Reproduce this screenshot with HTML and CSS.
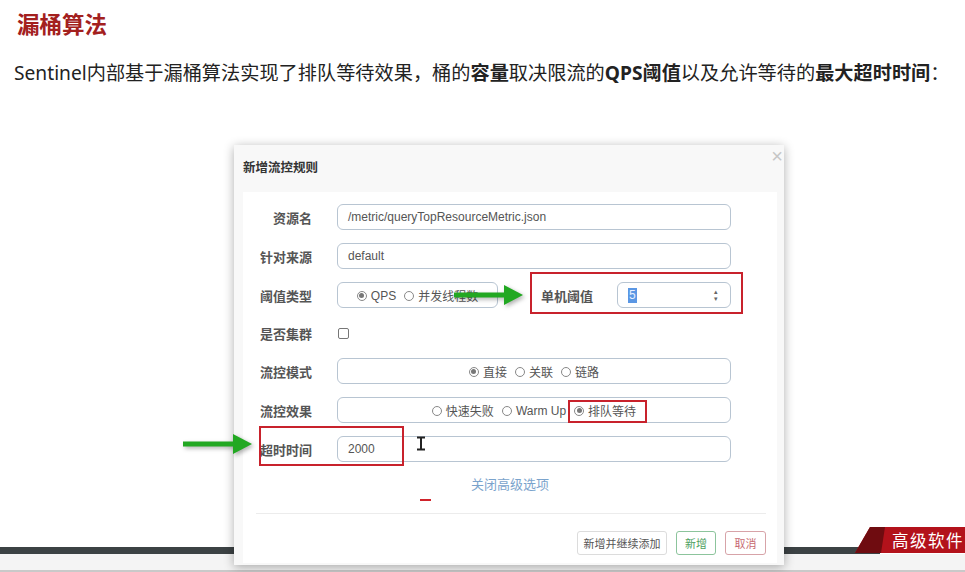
FILE: index.html
```html
<!DOCTYPE html>
<html lang="zh-CN">
<head>
<meta charset="utf-8">
<title>漏桶算法</title>
<link rel="stylesheet" href="styles.css">
</head>
<body>
<div class="page">
  <h1 class="title">漏桶算法</h1>
  <p class="desc">Sentinel内部基于漏桶算法实现了排队等待效果，桶的<b>容量</b>取决限流的<b>QPS阈值</b>以及允许等待的<b>最大超时时间</b>：</p>

  <div class="dialog">
    <div class="dlg-head">
      <span class="dlg-title">新增流控规则</span>
      <span class="close">×</span>
    </div>
    <div class="panel">
      <div class="form">
        <div class="row">
          <label class="lbl">资源名</label>
          <div class="input">/metric/queryTopResourceMetric.json</div>
        </div>
        <div class="row">
          <label class="lbl">针对来源</label>
          <div class="input">default</div>
        </div>
        <div class="row">
          <label class="lbl">阈值类型</label>
          <div class="input box-type">
            <span class="radio on"><i></i>QPS</span>
            <span class="radio"><i></i>并发线程数</span>
          </div>
          <label class="lbl lbl2">单机阈值</label>
          <div class="input num"><span class="sel">5</span><span class="spin">▴<br>▾</span></div>
        </div>
        <div class="row row-check">
          <label class="lbl">是否集群</label>
          <span class="checkbox"></span>
        </div>
        <div class="row">
          <label class="lbl">流控模式</label>
          <div class="input center">
            <span class="radio on"><i></i>直接</span>
            <span class="radio"><i></i>关联</span>
            <span class="radio"><i></i>链路</span>
          </div>
        </div>
        <div class="row">
          <label class="lbl">流控效果</label>
          <div class="input center">
            <span class="radio"><i></i>快速失败</span>
            <span class="radio latin"><i></i>Warm Up</span>
            <span class="radio on"><i></i>排队等待</span>
          </div>
        </div>
        <div class="row">
          <label class="lbl">超时时间</label>
          <div class="input">2000</div>
        </div>
      </div>
      <div class="adv">关闭高级选项</div>
      <div class="sep"></div>
      <div class="actions">
        <button class="btn b-more">新增并继续添加</button>
        <button class="btn b-add">新增</button>
        <button class="btn b-cancel">取消</button>
      </div>
    </div>
  </div>

  <div class="footer">
    <div class="fbar"></div>
    <div class="fstrip"></div>
  </div>
  <div class="brand">
    <svg class="brand-bg" width="110" height="26" viewBox="0 0 110 26">
      <polygon points="15,0 110,0 110,26 0,26" fill="#b3121b"/>
      <polygon points="15,0 30,0 26,26 0,26" fill="#6f0c10"/>
    </svg>
    <span class="brand-text">高级软件</span>
  </div>

  <svg class="arrow a1" width="72" height="26" viewBox="0 0 72 26">
    <rect x="0" y="10.5" width="54" height="5" fill="#22a822"/>
    <polygon points="50,3 69,13 50,23" fill="#22a822"/>
  </svg>
  <svg class="arrow a2" width="72" height="26" viewBox="0 0 72 26">
    <rect x="0" y="10.5" width="54" height="5" fill="#22a822"/>
    <polygon points="50,3 69,13 50,23" fill="#22a822"/>
  </svg>

  <div class="mark m1"></div>
  <div class="mark m2"></div>
  <div class="mark m3"></div>
  <div class="dash"></div>
  <svg class="ibeam" width="10" height="15" viewBox="0 0 10 15">
    <path d="M1 1.5h8M1 13.5h8M5 1.5v12" stroke="#222" stroke-width="2" fill="none"/>
  </svg>
</div>
</body>
</html>
```

FILE: styles.css
```css
* { box-sizing: border-box; }

body {
  margin: 0;
  background: #fff;
  font-family: "Noto Sans", "Noto Sans CJK SC", sans-serif;
}

.page {
  position: relative;
  width: 965px;
  height: 572px;
  overflow: hidden;
}

.title {
  margin: 0;
  padding: 11px 0 0 17px;
  font-family: "Noto Sans CJK SC", sans-serif;
  font-size: 22.5px;
  line-height: 24px;
  font-weight: 700;
  color: #a3201e;
}

.desc {
  margin: 25px 0 0 14px;
  font-size: 19.2px;
  line-height: 26px;
  color: #222;
  white-space: nowrap;
}

.desc b { font-weight: 700; }

/* dialog */
.dialog {
  position: relative;
  z-index: 2;
  width: 550px;
  height: 420px;
  margin: 59px 0 0 234px;
  background: #f8f8f8;
  box-shadow: 0 2px 10px rgba(0, 0, 0, 0.32);
  display: flex;
  flex-direction: column;
}

.dlg-head {
  position: relative;
  height: 47px;
  padding: 10px 0 0 9px;
}

.dlg-title {
  font-family: "Noto Sans CJK SC", sans-serif;
  font-size: 12.5px;
  line-height: 17px;
  font-weight: 700;
  color: #333;
}

.close {
  position: absolute;
  right: 1px;
  top: 0;
  font-family: "Liberation Sans", sans-serif;
  font-size: 20px;
  line-height: 22px;
  color: #c6c6c6;
}

.panel {
  flex: 1;
  margin: 0 7px 2px 9px;
  background: #fff;
  padding-top: 12px;
  display: flex;
  flex-direction: column;
}

.form {
  padding-right: 46px;
  display: flex;
  flex-direction: column;
  gap: 13px;
}

.row {
  display: flex;
  align-items: center;
  height: 26px;
}

.row-check { height: 24px; }

.lbl {
  flex: none;
  width: 69px;
  margin-right: 25px;
  text-align: right;
  font-family: "Noto Sans CJK SC", sans-serif;
  font-size: 13px;
  font-weight: 700;
  color: #555;
  white-space: nowrap;
}

.lbl2 {
  width: 51px;
  margin-left: 43px;
  text-align: left;
}

.input {
  flex: 1;
  height: 26px;
  border: 1px solid #b8c5d2;
  border-radius: 6px;
  padding-left: 10px;
  display: flex;
  align-items: center;
  font-family: "Liberation Sans", "Noto Sans CJK SC", sans-serif;
  font-size: 12px;
  color: #555;
  white-space: nowrap;
}

.box-type {
  flex: none;
  width: 161px;
  padding-left: 0;
  justify-content: center;
}

.num {
  flex: none;
  width: 114px;
  position: relative;
}

.sel {
  background: #5b97e4;
  color: #e8f0ff;
  padding: 0 1px;
  line-height: 15px;
}

.spin {
  position: absolute;
  right: 12px;
  top: 5px;
  font-size: 7px;
  line-height: 7px;
  color: #666;
}

.center {
  justify-content: center;
  padding-left: 0;
}

.radio {
  display: inline-flex;
  align-items: center;
  margin: 1px 4px 0;
  font-family: "Noto Sans CJK SC", sans-serif;
  font-size: 12px;
  color: #555;
}

.radio.latin,
.box-type .radio:first-child {
  font-family: "Liberation Sans", sans-serif;
}

.radio i {
  width: 10px;
  height: 10px;
  border: 1px solid #888;
  border-radius: 50%;
  margin-right: 4px;
  display: inline-flex;
  align-items: center;
  justify-content: center;
  background: #fff;
}

.radio.on i::after {
  content: "";
  width: 5px;
  height: 5px;
  border-radius: 50%;
  background: #777;
}

.checkbox {
  width: 11px;
  height: 11px;
  border: 1px solid #777;
  border-radius: 2px;
  margin-left: 1px;
}

.adv {
  margin-top: 13px;
  text-align: center;
  font-family: "Noto Sans CJK SC", sans-serif;
  font-size: 13px;
  line-height: 18px;
  color: #7aa3cc;
}

.sep {
  margin: 20px 11px 0 13px;
  height: 1px;
  background: #ececec;
}

.actions {
  margin-top: 17px;
  padding-right: 11px;
  display: flex;
  justify-content: flex-end;
  gap: 9px;
}

.btn {
  height: 24px;
  padding: 0;
  border: 1px solid #dcdcdc;
  border-radius: 3px;
  background: #fff;
  font-family: "Noto Sans CJK SC", sans-serif;
  font-size: 11px;
  color: #555;
}

.b-more { width: 90px; }
.b-add { width: 40px; border-color: #8cc49c; color: #4ea060; }
.b-cancel { width: 41px; border-color: #d7a3a8; color: #c76a72; }

/* slide footer */
.footer {
  position: absolute;
  left: 0;
  right: 0;
  bottom: 0;
  z-index: 1;
}

.fbar {
  width: 880px;
  height: 7px;
  background: #3c4244;
}

.fstrip {
  height: 18px;
  background: #f4f4f4;
  border-bottom: 2px solid #c9c9c9;
}

.brand {
  position: absolute;
  left: 855px;
  top: 527px;
  width: 110px;
  height: 26px;
  z-index: 1;
}

.brand-bg { position: absolute; left: 0; top: 0; }

.brand-text {
  position: absolute;
  left: 37px;
  top: 1px;
  font-family: "Noto Sans CJK SC", serif;
  font-size: 16.5px;
  line-height: 24px;
  letter-spacing: 1.5px;
  color: #fff;
  white-space: nowrap;
}

/* annotations */
.arrow {
  position: absolute;
  z-index: 3;
  filter: drop-shadow(2px 2px 2px rgba(0, 0, 0, 0.3));
}

.a1 { left: 454px; top: 282px; }
.a2 { left: 183px; top: 431px; }

.mark {
  position: absolute;
  z-index: 3;
  border: 2px solid #c8222c;
}

.m1 { left: 530px; top: 272px; width: 213px; height: 42px; }
.m2 { left: 568px; top: 400px; width: 79px; height: 23px; }
.m3 { left: 259px; top: 426px; width: 145px; height: 40px; }

.dash {
  position: absolute;
  z-index: 3;
  left: 420px;
  top: 499px;
  width: 11px;
  height: 2px;
  background: #d0232b;
}

.ibeam {
  position: absolute;
  z-index: 3;
  left: 416px;
  top: 436px;
}
```
